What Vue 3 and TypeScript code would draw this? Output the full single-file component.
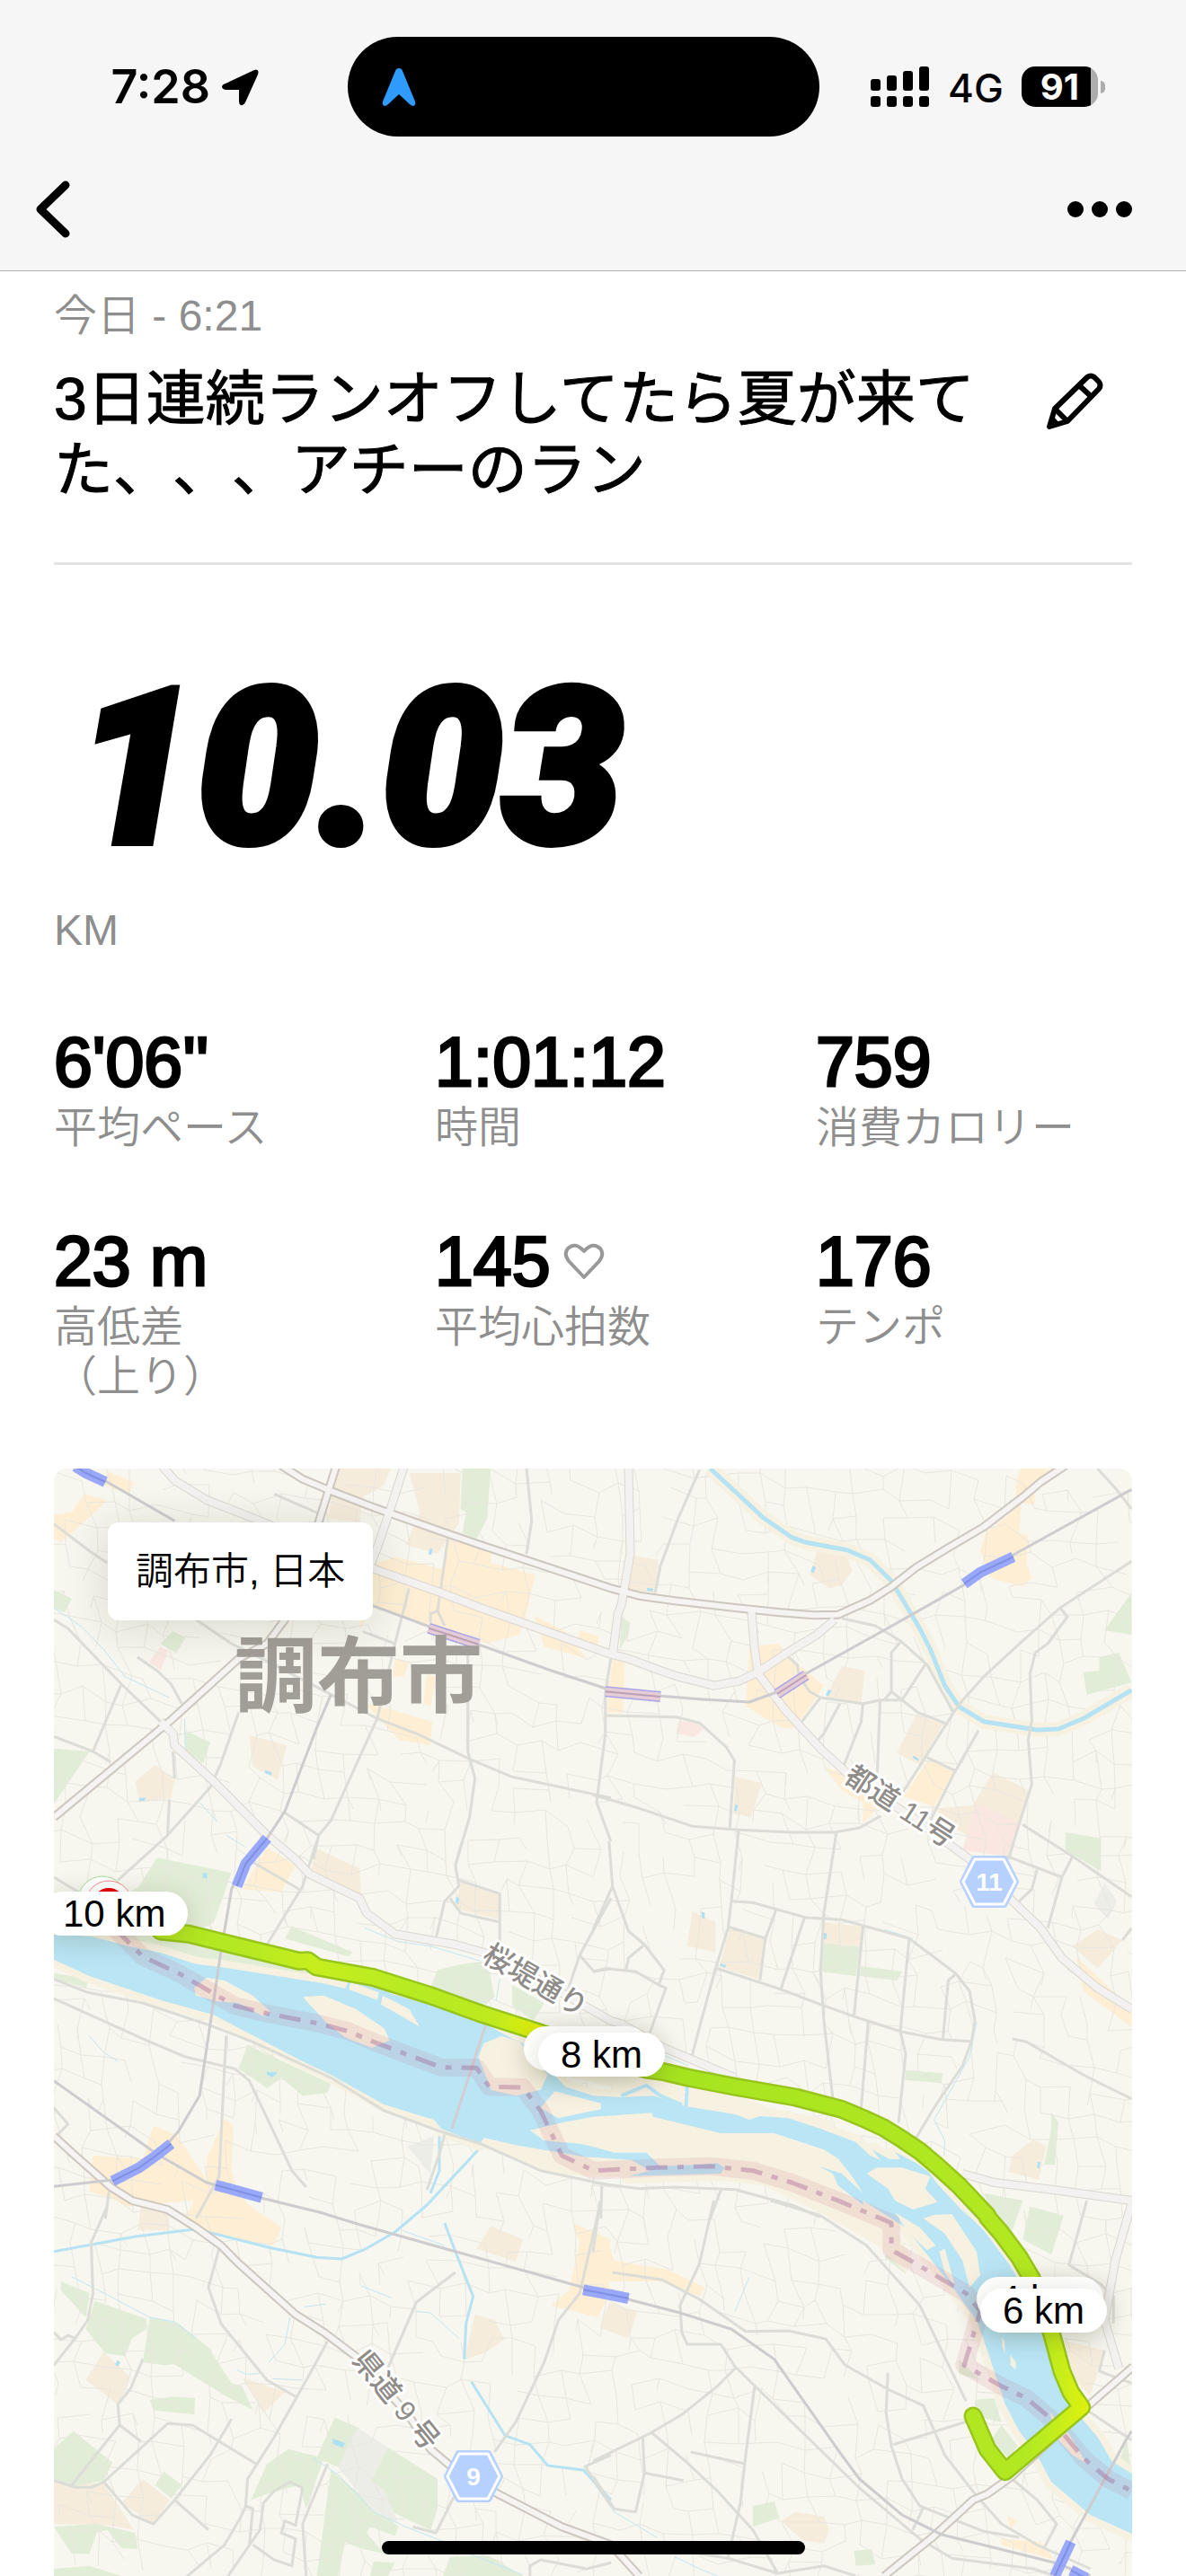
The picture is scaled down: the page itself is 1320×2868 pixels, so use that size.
<script setup lang="ts">
interface Stat {
  value: string
  label: string[]
  heart?: boolean
}

const stats: Stat[] = [
  { value: "6'06''", label: ['平均ペース'] },
  { value: '1:01:12', label: ['時間'] },
  { value: '759', label: ['消費カロリー'] },
  { value: '23 m', label: ['高低差', '（上り）'] },
  { value: '145', label: ['平均心拍数'], heart: true },
  { value: '176', label: ['テンポ'] },
]

// Map geometry is stored per tile; every tile has its own origin on the 1200 x 1233 map.
const tiles: Record<string, [number, number]> = {
  A: [0, -5],
  B: [600, -5],
  C: [0, 415],
  D: [600, 415],
  E: [0, 815],
  F: [600, 815],
}
const UNIT_X = 620 / 1568
const UNIT_Y = 1 / 3

function line(src: string): string {
  let tile = tiles.A
  const out: string[] = []
  for (const token of src.split(' ')) {
    if (tiles[token]) {
      tile = tiles[token]
      continue
    }
    const [x, y] = token.split(',').map(Number)
    out.push(`${(tile[0] + x * UNIT_X).toFixed(1)},${(tile[1] + y * UNIT_Y).toFixed(1)}`)
  }
  return out.join(' ')
}
const lines = (src: string): string[] =>
  src.trim().split('\n').map((row) => line(row.trim()))

const parks = lines(`
A 1150,10 1230,10 1225,80 1220,180 1190,250 1150,230 1160,160 1145,150
A 300,600 335,558 370,580 345,632
A 0,420 50,450 30,495 0,480
A 0,950 100,960 60,1030 0,1135
A 370,890 440,930 420,1000 372,960
B 80,510 105,530 100,570 75,620
B 1516,430 1516,570 1440,555
B 1380,695 1425,690 1425,645 1480,630 1516,730 1390,770
B 1330,1230 1430,1250 1430,1360 1330,1290
C 290,55 500,105 450,270 400,300 250,280 200,180 240,150
C 270,300 700,420 830,460 760,465 500,425 300,370 150,325
C 670,285 840,370 830,385 650,325
C 1150,410 1220,400 1240,520 1200,560 1060,490 1080,430
C 1290,480 1380,540 1350,600 1290,550
C 545,680 780,810 770,840 700,850 640,790 600,825 520,760
C 0,440 100,460 90,490 0,460
D 645,340 750,352 740,450 640,435
D 755,417 870,435 855,465 750,450
D 880,765 985,775 980,808 878,797
D 1290,905 1310,940 1300,1080 1270,1080 1290,960
D 1100,1175 1210,1200 1180,1300 1130,1260
D 120,770 180,800 130,820
F 1230,20 1325,50 1290,180 1210,130
F 850,150 885,210 880,245 820,190
F 1030,530 1090,600 1030,580
F 1075,665 1130,660 1150,740 1080,720
F 1150,750 1195,820 1170,860 1120,800
F 450,1020 510,1005 525,1060 450,1090
F 735,1170 785,1165 795,1215 740,1220
F 1500,800 1516,900 1480,880
E 20,270 100,310 90,390 20,300
E 115,335 260,395 260,430 220,460 200,520 145,510 90,430
E 270,390 350,410 445,500 400,540 310,550 250,540
E 340,490 440,500 500,610 530,620 560,700 480,650 330,540
E 270,665 340,655 397,660 395,715 280,700
E 0,830 55,770 165,875 140,935 50,955 0,930
E 310,905 360,950 330,995 285,950
E 660,830 760,860 710,1030 690,950 600,980 555,1000 600,880
E 790,725 860,760 800,890 740,860
E 940,825 1080,930 1080,1030 1060,1100 915,1020 890,940
E 780,900 850,970 970,1090 960,1120 890,1090 880,1110 930,1180 860,1160 820,1140 800,1254 740,1254
E 900,1205 960,1210 940,1254 890,1254
E 1115,1190 1220,1185 1320,1254 1095,1254
E 0,1090 120,1080 230,1110 235,1165 190,1160 150,1100 120,1110 100,1180 50,1180
E 0,1230 100,1220 190,1254 0,1254
`)

const shops = lines(`
A 150,25 225,60 210,100 140,70
A 85,100 150,120 130,145 60,220 20,260 0,250 0,170 50,160
A 1115,250 1230,280 1230,330 1355,370 1330,500 1310,570 1220,600 1100,560 900,480 860,550 890,340 960,310 1090,350
A 890,800 1065,860 1060,940 970,920 885,810
A 960,650 1000,660 985,710 955,710
A 1050,700 1075,710 1060,810 1040,800
A 1350,505 1440,560 1500,650 1380,610
A 1480,555 1535,575 1530,610 1475,585
B 1205,15 1320,15 1240,70 1245,135 1205,130 1200,230 1225,240 1220,330 1235,380 1210,410 1120,380 1090,290 1105,230 1190,150 1190,60
B 440,610 520,600 570,660 650,740 600,830 560,885 530,880 430,810
B 55,650 90,650 85,830 40,830 45,760
B 650,1010 720,1040 800,1150 760,1200 760,1130 700,1090
B 945,985 1015,1030 960,1145 875,1110
C 600,20 680,80 640,170 530,160
C 280,950 345,980 390,1060 430,1130 430,1060 480,925 505,950 500,1100 520,1180 580,1250 400,1260 390,1200 200,1220 160,1190 100,1170 110,1050 250,1060
E 400,0 530,0 640,90 620,150 440,110 370,50
E 1460,75 1568,130 1550,230 1568,300 1530,390 1400,350 1450,300 1480,140
F 0,120 40,130 60,200 210,230 315,290 300,320 190,270 0,270
D 1360,385 1516,560 1516,620 1380,500
F 1150,1130 1260,1140 1300,1200 1150,1150
F 1165,1050 1195,1070 1175,1095
`)

const schools = lines(`
A 800,10 950,10 930,70 870,110 860,195 770,180
A 1000,30 1145,30 1140,200 1080,300 990,270 1030,160
A 550,905 655,940 630,1055 560,1010
A 285,1005 340,1050 330,1115 240,1130 230,1060
B 110,305 185,320 175,430 100,420
B 630,290 710,295 730,355 700,405 665,415 610,370
B 700,675 765,690 755,795 655,780
B 910,835 985,870 920,1005 855,965
B 400,1045 475,1065 445,1180 395,1165
B 1125,1030 1225,1090 1200,1205 1170,1320 980,1190 970,1150 1070,1140
C 740,25 860,90 865,180 720,110
C 1145,135 1255,180 1250,260 1130,225
D 280,235 345,270 345,370 265,350
D 385,290 485,330 465,460 355,420
D 650,270 760,285 750,350 645,340
D 1420,295 1490,330 1420,425 1350,350
D 1240,995 1275,1020 1255,1130 1170,1105 1180,1050
E 245,20 325,40 325,100 235,100
E 140,505 215,590 180,680 90,600
E 530,590 650,640 590,710
E 250,930 325,1000 280,1080 190,1010
E 0,940 140,945 225,1100 160,1085 0,1080
E 1185,380 1240,400 1268,465 1210,510 1155,530
E 1230,85 1320,130 1300,205 1190,160
F 45,340 125,370 100,460 20,425
F 570,1040 650,1055 665,1100 650,1145 590,1135 530,1070
F 1260,450 1440,500 1400,650 1320,560
`)

const clinics = lines(`
A 300,610 322,625 300,690 268,660
B 240,858 290,860 310,885 285,912 235,900
B 1080,1130 1200,1200 1165,1310 1040,1290
`)

const depots = lines(`
E 855,760 940,825 890,935 930,965 970,1080 900,1040 800,890
C 995,1020 1070,985 1060,1110
D 1440,140 1475,200 1450,260 1410,210
`)

const pools = lines(`
B 618,340 628,345 620,365 613,360
B 152,413 170,416 168,425 152,424
B 663,752 672,758 662,776 655,770
B 902,974 918,985 914,992 900,982
B 400,1138 408,1140 404,1160 397,1158
A 1058,282 1067,284 1062,304 1054,300
A 595,1022 613,1030 612,1040 594,1032
A 240,1116 258,1114 256,1124 240,1126
D 305,236 315,238 314,258 306,256
D 358,408 374,413 372,422 358,416
D 650,306 658,308 656,328 648,326
D 1252,1070 1260,1072 1256,1094 1250,1090
E 178,533 188,540 180,554 172,548
E 785,795 820,810 812,826 785,812
C 420,104 432,108 430,126 418,120
C 598,770 630,772 615,788 600,780
C 1132,185 1141,190 1138,210 1131,205
`)

const river = line(
  'C 0,310 105,318 210,350 300,372 400,410 470,420 600,445 760,475 820,492 830,465 915,480 950,510 1100,560 1200,600 1290,660 1370,700 1400,770 1440,820 ' +
  'D 0,850 80,855 170,850 260,885 400,912 440,930 470,918 550,925 640,960 740,1005 780,1050 810,1065 785,1030 835,1062 865,1062 850,1038 910,1075 945,1105 970,1145 1060,1260 ' +
  'F 1040,30 1100,100 1170,210 1230,330 1270,460 1310,600 1370,720 1420,790 1460,870 1520,915 1530,1120 1400,1050 1290,940 1250,850 1200,770 1160,680 1110,500 1080,400 1000,270 940,180 880,90 840,60 760,0 ' +
  'D 760,1215 690,1150 675,1110 635,1085 700,1110 760,1175 730,1120 690,1060 650,1030 510,975 360,975 170,920 165,907 0,920 ' +
  'C 1430,940 1340,965 1380,1000 1480,1010 ' +
  'D 0,1020 60,1040 150,1040 190,1085 300,1080 350,1075 370,1090 360,1110 100,1118 160,1100 110,1065 0,1055 ' +
  'C 1500,1055 1400,1035 1300,1015 1210,990 1200,1010 1090,960 1070,930 930,880 780,780 700,735 570,655 450,580 300,530 100,450 0,395',
)
const floodplain = line(
  'C 1340,965 1568,920 D 170,905 360,975 510,975 650,1030 700,1100 780,1200 F 840,60 900,200 880,240 800,150 640,40 ' +
  'D 640,1240 480,1150 300,1125 0,1120 C 1400,1110 1200,1020 1340,1010',
)
const sandbanks = lines(`
C 395,490 430,455 480,465 560,515 610,570 590,585 520,540 460,535 400,515
C 700,520 760,515 850,560 930,625 945,665 895,690 820,655 770,610
C 925,515 1000,560 1030,620 980,585 920,545
C 835,470 915,505 910,530 830,495
C 1195,720 1210,675 1260,650 1310,670 1390,780 1370,830 1300,850 1230,830
C 1410,835 1540,875 1540,895 1420,925 1370,890
C 1400,770 1568,820 D 70,850 130,825 160,850 200,852 245,880 262,810 170,770 0,780
D 265,815 340,830 430,860 500,890 700,940 640,950 550,920 450,915 400,905 265,885
D 770,1110 800,1090 870,1090 950,1120 935,1160 970,1205 900,1230 850,1200 830,1160
F 930,60 960,48 1010,45 1080,170 1090,250 1060,290 1040,200 990,110
F 975,170 990,160 1020,290 990,240
F 850,40 920,90 965,150 940,165 890,110
F 1175,515 1190,540 1190,565 1175,550
F 1150,455 1158,470 1160,510 1153,490
F 1285,705 1340,780 1390,880 1350,850 1310,800
`)
const inlets = lines(`
C 1255,865 1320,868 1365,850 1400,800
D 80,850 130,825 150,815 190,850 250,880
D 265,815 262,885
`)

const prefecture = line(
  'C 170,290 250,385 350,440 430,495 510,550 600,575 750,610 830,635 900,670 1000,715 1090,755 1190,757 1225,820 1320,822 1370,900 1430,1050 1520,1100 ' +
  'D 180,1090 330,1085 450,1100 560,1140 700,1205 800,1255 F 840,75 840,165 900,205 1050,310 1090,370 1045,550 1150,620 1220,660 1290,730 1380,860 1450,930 1516,970',
)

const canal = line('B 330,15 480,180 560,245 600,262 715,287 780,320 840,390 920,550 950,620 990,740 1030,810 1100,860 1250,888 1310,885 1380,850 1516,755')
const creeks = lines(`
E 0,170 230,120 400,95 600,155 740,190 810,195 880,160 960,105 1050,15 C 1195,1030
E 1175,605 1220,690 1270,785 1340,815 1390,885 1490,900 1568,1000
E 1100,75 1130,170 1180,320 1160,410 1155,530
C 1085,985 1085,1100 1060,1175
`)
const brooks = lines(`
A 0,480 80,545 140,620 200,710 325,780
A 368,850 370,960
A 410,1130 460,1195
A 485,1240 540,1280
C 875,290 970,335 1060,350 1200,400
C 100,650 140,705 180,735
C 1255,460 1245,530
E 980,100 1100,150
E 865,80 940,105
E 50,255 150,315 270,390 340,405 400,460
E 865,285 950,325
E 1020,370 1060,375 1140,460
E 665,390 650,480 605,540
E 705,355 765,346
E 615,595 700,600
E 730,860 800,915 900,1040 990,1090 1100,1140
E 1170,1180 1320,1250
E 515,565 540,580 580,578
D 820,295 900,325
D 1080,605 1060,720 960,930 990,1000 988,1050
D 200,715 270,750
F 440,255 400,370
F 0,940 60,1040 180,1125
F 230,1190 300,1230 350,1254
`)

const streets = lines(`
A 0,200 100,290 150,330
A 400,520 500,600 570,640 780,770 910,850 1020,900 1170,985 1290,1045 1430,1080 1568,1115
A 620,100 745,165
A 0,520 40,550 190,735 300,860
A 190,735 110,960
A 0,910 110,960 160,995
A 235,645 290,690 330,735 360,800
A 520,830 470,1000 440,1080 320,1240 180,1390
A 320,1240 325,1120
A 335,960 340,1050
A 1110,240 1080,490 1060,500 1060,530
A 1080,490 1100,540
A 1000,415 960,600 910,850 860,980 780,1190 745,1240 730,1320
A 745,1240 650,1165
A 1165,600 1165,960 1185,1050 1170,1180 1130,1340
A 1330,10 1345,190 1330,300
A 870,560 960,600
B 300,20 240,180 190,340 175,430
B 50,650 35,760 35,900 10,1130 50,1260
B 35,840 235,845 300,865 375,945 398,990 385,1215
B 0,1105 130,1150 280,1210 410,1222 560,1230 680,1230 750,1215 810,1175
B 545,640 575,670 580,710 610,760 640,780 585,865
B 640,780 760,800 810,788 870,788 915,830 1000,870
B 695,800 650,900 635,920
B 760,800 755,860 705,1010
B 808,790 800,1040
B 840,760 820,788
B 840,760 870,788
B 840,760 840,630 865,595
B 935,670 870,788
B 700,515 795,540 865,590 940,670 1015,830
B 1516,325 1315,480 1210,590 1100,710 1040,790 1015,830 935,980 865,1110
B 1315,480 1335,510 1280,600 1245,630 1230,700 1235,860 1225,920 1235,1070 1200,1200 1170,1320
B 940,980 1020,1025 950,1190
B 1020,1025 1085,890
B 1210,1205 1350,1310 D 1516,185
B 1420,15 1470,80 1516,150
B 410,1222 D 390,195 380,290 345,425 300,620 278,720
B 685,1230 D 650,240 640,430 650,600 675,860
C 740,0 700,150 600,345
C 0,120 70,170
C 560,70 690,160
C 0,460 95,505 250,540 440,615 560,670 780,790 930,900 1090,970 1200,1010 1370,1100 1568,1150
C 0,525 270,670 370,720 510,760 550,800 610,950 670,1100 710,1155
C 485,650 480,760 465,1120 400,1260
C 1150,0 1130,80 1140,150 1100,200 1075,325
C 1140,130 1255,175 1255,350
C 1115,190 1145,240 1255,270
C 1568,190 1480,380 1440,520
C 1480,380 1520,435 1568,425
C 1100,980 1085,1045 1050,1165
C 0,890 40,945 10,980
C 155,1170 145,1260
D 45,0 55,150 0,295
D 55,150 100,300 145,345 200,430 185,480 205,490 160,640
D 145,345 100,390 92,435
D 0,435 35,425 120,435 185,480
D 390,200 450,205 600,255 700,262 890,325 1020,440 1060,500 1075,600 1065,670 1040,750 960,890 910,990
D 380,285 485,325 470,465
D 515,230 485,325
D 595,255 530,490
D 350,425 530,495 640,545 735,585 865,635 980,662 1065,668
D 760,285 735,580
D 890,325 865,635 880,710 860,940
D 775,600 755,890
D 1020,445 1000,465 985,660
D 1180,660 1220,670 1300,725 1380,780 1430,810 1516,860
D 1165,50 1320,120 1350,50
D 1250,95 1235,160 1200,200
D 1320,120 1280,290
D 0,1140 130,1160 230,1155 400,1163 560,1215 640,1255
D 25,1150 22,1260
D 360,1165 330,1260
D 1516,290 1490,330
E 150,20 105,140 110,310 95,400 60,460 0,550
E 0,440 20,465 40,450 60,460
E 465,160 435,290 470,410 600,600 680,655
E 770,470 720,580 620,790 545,930 540,1020 525,1060 480,1150 370,1260
E 540,1020 560,1030 550,1150
E 0,935 60,958 105,958 140,940 320,745 390,750 570,880
E 250,530 215,630 180,680 185,750 245,805
E 185,750 50,950
E 500,730 440,850 340,1000 280,1080 220,1050 140,940
E 340,1000 435,1100
E 1130,240 1020,340 940,560
E 1540,0 1480,310 1420,400 1380,540 1300,740 1240,840
E 1130,980 1075,1110 1010,1090
E 770,880 700,1080 710,1254
E 560,1150 620,1200 670,1220 680,1130 640,1110 650,1070 680,1085 700,960 665,940 620,970 590,1010 580,1100 490,1254
E 1568,850 1495,888 1568,1020
E 1340,1254 1340,1220 1370,1200 1500,1230 1568,1210
F 340,0 300,210 245,350 250,440 265,480 360,480 400,555 560,740 750,960 920,1130 1010,1195 1240,1230 1300,1254
F 20,0 0,170
F 55,240 195,265 300,330 430,437 550,435 655,462 710,550 830,630 930,685 990,850 1075,980 1150,1080 1250,1150 1400,1230
F 500,0 640,50 770,150 920,350 1050,670
F 400,560 350,620 250,715 165,775 0,870
F 140,790 145,910 120,1040 60,1030 0,920
F 145,910 255,935
F 165,775 260,870 350,970 450,1100 520,1245
F 455,620 430,850 415,1010 380,1190
F 275,840 430,880
F 830,575 825,710 840,820 870,930 920,1020 1100,1105 1200,1125
F 845,815 1060,735
F 930,1025 900,1100
F 1180,930 1250,1000 1305,1080 1270,1160
F 1390,0 1340,215 1430,280 1465,320 1465,410
F 1440,500 1425,570 1516,610
F 1390,700 1516,800
F 300,1180 380,1195 520,1245 650,1220 740,1254
`)

const avenues = lines(`
A 300,0 340,55 430,120 560,180 600,200 900,350 1090,430 1200,480 1320,530 1568,635 B 100,650 190,690 240,710 340,740 410,725 465,695 560,620 630,570 680,520
A 985,10 950,140 910,280 890,340
A 300,860 335,900 340,940 450,1060 600,1240 680,1320 C 720,110 860,190 880,240 960,310 1130,345 1250,385 1568,600 D 80,610 200,690 400,790
B 100,10 105,300 80,470 70,500 55,640
B 445,480 455,620 465,700 540,820 640,950 740,1060 900,1180 1060,1320 D 1060,60 1190,210 1260,290 1320,390 1420,490 1516,560
D 1040,1110 1130,1140 1300,1165 1516,1200
F 1516,10 1470,200 1440,400 1480,560
`)
const highways = lines(`
A 640,5 700,50 780,90 900,145 1090,225 1200,270 1340,325 1568,415 B 130,440 230,457 400,480 520,495 620,505 690,503 780,455 840,410 910,345 1000,280 1100,210 1210,110 1260,60 1330,5
A 795,5 770,100 745,195 650,520 600,600 520,650 330,855 0,1180
C 0,985 60,1050 160,1155 220,1200 320,1230 E 400,90 470,150 520,210 680,380 760,440 860,530 1000,720 1060,830 1120,890 1250,980 1430,1090 1568,1150 F 130,1254
F 820,1254 960,1120 1070,1000 1110,980 1180,920 1380,700 1520,555
`)

const rails = lines(`
A 100,20 150,60 340,190
A 890,470 1050,540 1200,605 1400,690 1568,755 B 190,775 300,785 440,795 510,765 600,700 850,535 1050,400 1180,305 1516,85
A 780,770 740,880 650,1160 600,1250 C 540,70 500,160 470,370 440,610 410,850 350,970 320,1010 170,1130 0,1153
C 0,800 290,1045 430,1140 580,1190 750,1240 E 860,80 1130,170 1490,290 1568,315 F 245,375 390,430 510,530 700,850 750,930 870,1050 980,1115 1300,1210 1400,1254
F 1516,770 1500,800 1340,1150 1290,1254
`)
const stations = lines(`
A 60,8 90,30 145,60
B 1045,400 1090,362 1183,310
A 600,1250 C 540,75 515,150
C 165,1135 240,1090 290,1048 330,1010
C 455,1148 585,1190
E 1490,298 1568,315 F 100,327
F 1345,1140 1300,1254
F 1345,1235 1390,1262
`)
const underground = lines(`
B 518,768 600,705
A 1055,548 1195,602
B 35,760 190,777
`)

const footbridge = line('C 1215,615 1120,960')

const route = line(
  'C 300,300 380,310 500,345 690,400 715,398 740,420 900,455 1060,515 1200,575 1370,640 D 150,762 200,770 270,790 400,820 570,855 700,895 760,925 820,958 870,995 920,1035 970,1085 1030,1150 1110,1250 ' +
  'F 1110,55 1150,110 1200,190 1235,260 1290,440 1320,570 1345,640 1375,690 1160,905 1110,830 1070,720',
)

// Side streets: a jittered lattice with some edges left out.
function sideStreets(): string {
  let seed = 20240621
  const rnd = () => {
    seed = (seed * 1664525 + 1013904223) % 4294967296
    return seed / 4294967296
  }
  const step = 27
  const cols = 49
  const rows = 50
  const node: [number, number][][] = []
  for (let r = 0; r < rows; r++) {
    node.push([])
    for (let c = 0; c < cols; c++) {
      const x = -40 + c * step + (rnd() - 0.5) * 17 + r * 2
      const y = -50 + r * step + (rnd() - 0.5) * 17 + c * 3 - 60
      node[r].push([Math.round(x - 40), Math.round(y)])
    }
  }
  let d = ''
  for (let r = 0; r < rows - 1; r++) {
    for (let c = 0; c < cols - 1; c++) {
      const [x, y] = node[r][c]
      if (rnd() < 0.66) d += `M${x} ${y}L${node[r][c + 1].join(' ')}`
      if (rnd() < 0.66) d += `M${x} ${y}L${node[r + 1][c].join(' ')}`
      if (rnd() < 0.12) d += `M${x} ${y}l${Math.round(rnd() * 16 - 8)} 13`
    }
  }
  return d
}
const lanes = sideStreets()

interface Pin {
  text: string
  x: number
  y: number
}
const pins: Pin[] = [
  { text: '10 km', x: -15, y: 471 },
  { text: '', x: 523, y: 621 },
  { text: '8 km', x: 539, y: 628 },
  { text: '4 km', x: 1027, y: 900 },
  { text: '6 km', x: 1031, y: 913 },
]
const pinStyle = (p: Pin) => ({ left: `${(p.x / 1200) * 100}%`, top: `${(p.y / 1233) * 100}%` })

const shields = [
  { no: '11', x: 1041, y: 460 },
  { no: '9', x: 467, y: 1122 },
]
const roadNames = [
  { name: '都道 11号', x: 942, y: 376, turn: 33 },
  { name: '桜堤通り', x: 536, y: 570, turn: 30 },
  { name: '県道 9 号', x: 381, y: 1037, turn: 51 },
]
</script>

<template>
  <div class="screen">
    <header class="top">
      <div class="status">
        <div class="clock">
          <span>7:28</span>
          <svg width="44" height="42" viewBox="0 0 44 42" aria-hidden="true">
            <path d="M5 17 37 2q6-2 4 5L27 38q-2 4-5 3-2-1-2-4V24H6q-4 0-5-3 0-3 4-4z" fill="#000" />
          </svg>
        </div>
        <div class="island">
          <svg width="38" height="42" viewBox="0 0 38 42" aria-hidden="true">
            <path d="M19 0q3 0 4 3l14 34q1 4-2 5-2 0-4-2L19 29 7 40q-2 2-4 2-3-1-2-5L15 3q1-3 4-3z" fill="#2f9bff" />
          </svg>
        </div>
        <div class="system">
          <svg width="66" height="46" viewBox="0 0 66 46" aria-hidden="true">
            <g fill="#000">
              <rect x="0" y="14" width="11" height="13" rx="3" />
              <rect x="18" y="10" width="11" height="17" rx="3" />
              <rect x="36" y="5" width="11" height="22" rx="3" />
              <rect x="54" y="0" width="11" height="27" rx="3" />
              <rect x="0" y="33" width="11" height="12" rx="3" />
              <rect x="18" y="33" width="11" height="12" rx="3" />
              <rect x="36" y="33" width="11" height="12" rx="3" />
              <rect x="54" y="33" width="11" height="12" rx="3" />
            </g>
          </svg>
          <span class="network">4G</span>
          <span class="battery">91</span>
          <span class="nub"></span>
        </div>
      </div>
      <nav class="nav">
        <button type="button" class="icon" aria-label="戻る">
          <svg width="38" height="64" viewBox="0 0 38 64" aria-hidden="true">
            <path d="M33 5 5 32l28 27" fill="none" stroke="#000" stroke-width="9" stroke-linecap="round" stroke-linejoin="round" />
          </svg>
        </button>
        <button type="button" class="icon" aria-label="その他">
          <svg width="74" height="20" viewBox="0 0 74 20" aria-hidden="true">
            <circle cx="10" cy="10" r="9" /><circle cx="37" cy="10" r="9" /><circle cx="64" cy="10" r="9" />
          </svg>
        </button>
      </nav>
    </header>

    <main class="run">
      <section class="heading">
        <p class="date">今日 - 6:21</p>
        <div class="title-row">
          <h1>3日連続ランオフしてたら夏が来てた、、、アチーのラン</h1>
          <button type="button" class="icon edit" aria-label="編集">
            <svg width="64" height="64" viewBox="0 0 64 64" aria-hidden="true">
              <g fill="none" stroke="#000" stroke-width="6" stroke-linejoin="round">
                <path d="M4 60 10 40 46 5q4-3 8 0l5 5q3 4 0 8L24 54z" />
                <path d="m37 14 14 13M10 40l14 14" />
              </g>
              <path d="M3 61 7 47l10 11z" />
            </svg>
          </button>
        </div>
      </section>

      <section class="distance">
        <p class="figure">10.03</p>
        <p class="unit">KM</p>
      </section>

      <dl class="stats">
        <div v-for="s in stats" :key="s.label[0]" class="stat">
          <dd>
            <span>{{ s.value }}</span>
            <svg v-if="s.heart" width="46" height="42" viewBox="0 0 46 42" aria-hidden="true">
              <path d="M23 39 6 21q-6-8-1-14 8-8 18 3 10-11 18-3 5 6-1 14z" fill="none" stroke="#999" stroke-width="4" stroke-linejoin="round" />
            </svg>
          </dd>
          <dt><span v-for="l in s.label" :key="l">{{ l }}</span></dt>
        </div>
      </dl>

      <section class="map" aria-label="ルート">
        <svg class="ground" viewBox="0 0 1200 1233" aria-hidden="true">
          <defs>
            <linearGradient id="pace" gradientUnits="userSpaceOnUse" x1="0" y1="0" x2="1200" y2="0">
              <stop offset="0" stop-color="#b0e620" />
              <stop offset=".17" stop-color="#b4e822" />
              <stop offset=".24" stop-color="#c6ee1e" />
              <stop offset=".34" stop-color="#b6ea22" />
              <stop offset=".41" stop-color="#bfea1e" />
              <stop offset=".45" stop-color="#e4ee0a" />
              <stop offset=".5" stop-color="#c4ec18" />
              <stop offset=".56" stop-color="#a6e420" />
              <stop offset=".9" stop-color="#b2e822" />
              <stop offset=".92" stop-color="#bcec20" />
              <stop offset=".955" stop-color="#daf010" />
            </linearGradient>
          </defs>
          <rect width="1200" height="1233" fill="#f7f6ef" />
          <polygon v-for="(p, i) in schools" :key="'s' + i" :points="p" fill="#f6ecdc" />
          <polygon v-for="(p, i) in shops" :key="'c' + i" :points="p" fill="#feefd4" />
          <polygon v-for="(p, i) in clinics" :key="'h' + i" :points="p" fill="#fbe7e1" />
          <polygon v-for="(p, i) in parks" :key="'p' + i" :points="p" fill="#e1edd6" />
          <polygon v-for="(p, i) in depots" :key="'d' + i" :points="p" fill="#ededE8" />
          <path :d="lanes" fill="none" stroke="#e8e7df" stroke-width="1" />
          <g fill="none" stroke-linejoin="round">
            <polyline :points="canal" stroke="#f6f1e1" stroke-width="16" />
            <polyline :points="canal" stroke="#b6e3f3" stroke-width="5" />
            <polyline v-for="(p, i) in creeks" :key="'k' + i" :points="p" stroke="#b6e3f3" stroke-width="3" />
            <polyline v-for="(p, i) in brooks" :key="'b' + i" :points="p" stroke="#c2e7f4" stroke-width="1" />
          </g>
          <polygon :points="river" fill="#f6f1e1" stroke="#f6f1e1" stroke-width="16" stroke-linejoin="round" />
          <polygon :points="floodplain" fill="#f6f1e1" />
          <polygon :points="river" fill="#b9e5f5" />
          <polygon v-for="(p, i) in sandbanks" :key="'i' + i" :points="p" fill="#f6f1e1" />
          <g fill="none" stroke="#b9e5f5" stroke-width="4">
            <polyline v-for="(p, i) in inlets" :key="'n' + i" :points="p" />
          </g>
          <polygon v-for="(p, i) in pools" :key="'w' + i" :points="p" fill="#aee1f4" />

          <g fill="none" stroke-linejoin="round">
            <polyline v-for="(p, i) in streets" :key="'t' + i" :points="p" stroke="#dcddd7" stroke-width="3" />
            <polyline v-for="(p, i) in avenues" :key="'ac' + i" :points="p" stroke="#dbd6cf" stroke-width="10" />
            <polyline v-for="(p, i) in highways" :key="'hc' + i" :points="p" stroke="#cdc7bf" stroke-width="10" />
            <polyline v-for="(p, i) in avenues" :key="'a' + i" :points="p" stroke="#f3f2f1" stroke-width="8" />
            <polyline v-for="(p, i) in highways" :key="'hw' + i" :points="p" stroke="#f5f4f2" stroke-width="6" />
            <polyline :points="footbridge" stroke="#d3cdd0" stroke-width="3" />
            <polyline v-for="(p, i) in rails" :key="'r' + i" :points="p" stroke="#cdccce" stroke-width="3" />
            <polyline v-for="(p, i) in stations" :key="'st' + i" :points="p" stroke="#99a8f8" stroke-width="12" stroke-linejoin="miter" />
            <polyline v-for="(p, i) in stations" :key="'sr' + i" :points="p" stroke="#7f8fe2" stroke-width="2" />
            <polyline v-for="(p, i) in underground" :key="'u' + i" :points="p" stroke="#a9a4ea" stroke-width="12" />
            <polyline v-for="(p, i) in underground" :key="'ui' + i" :points="p" stroke="#e5ccd6" stroke-width="9" />
            <polyline v-for="(p, i) in underground" :key="'ur' + i" :points="p" stroke="#b9a0b4" stroke-width="2" />
            <polyline :points="prefecture" stroke="#c8647d" stroke-opacity=".13" stroke-width="20" />
            <polyline :points="prefecture" stroke="#9c5a8c" stroke-opacity=".36" stroke-width="5" stroke-dasharray="24 11 7 11" />
          </g>

          <text x="339" y="264" class="city">調布市</text>
          <text
            v-for="r in roadNames"
            :key="r.name"
            class="road-name"
            :transform="`translate(${r.x} ${r.y}) rotate(${r.turn})`"
            y="11"
          >{{ r.name }}</text>
          <g v-for="s in shields" :key="s.no" :transform="`translate(${s.x} ${s.y})`">
            <path d="M-17-26h34L30 0 17 26h-34L-30 0z" fill="#b6d1ff" stroke="#b6d1ff" stroke-width="6" stroke-linejoin="round" />
            <path d="M-16-25h32L29 0 16 25h-32L-29 0z" fill="#b6d1ff" stroke="#fff" stroke-width="3" stroke-linejoin="round" />
            <text class="shield-no" y="10">{{ s.no }}</text>
          </g>

          <g fill="none" stroke-linejoin="round" stroke-linecap="round">
            <polyline :points="route" stroke="#98c51c" stroke-width="21" />
            <polyline :points="route" stroke="url(#pace)" stroke-width="16" />
          </g>
          <circle cx="54" cy="481" r="27" fill="#fff" stroke="#a6dc9c" stroke-width="1" />
          <circle cx="61" cy="485" r="26" fill="#fff" stroke="#f08a8a" stroke-width="1" />
          <circle cx="61" cy="485" r="18" fill="#e60000" />
        </svg>
        <div class="place">調布市, 日本</div>
        <span v-for="p in pins" :key="p.x" class="pin" :style="pinStyle(p)">{{ p.text }}</span>
      </section>
    </main>

    <div class="home-bar"></div>
  </div>
</template>

<style>
body {
  margin: 0;
  background: #fff;
}
</style>

<style scoped>
.screen {
  font-family: "Liberation Sans", "Noto Sans CJK JP", sans-serif;
  color: #000;
  overflow: hidden;
}

p,
h1,
dl,
dd {
  margin: 0;
}

.icon {
  display: flex;
  align-items: center;
  justify-content: center;
  padding: 0;
  border: 0;
  background: none;
}

.top {
  background: #f6f6f6;
  border-bottom: 1px solid #b0b0b0;
}

.status {
  display: grid;
  grid-template-columns: 387fr 525fr 408fr;
  align-items: center;
  padding-top: 41px;
  font-family: Inter, "Liberation Sans", sans-serif;
}

.clock {
  display: flex;
  align-items: center;
  justify-content: flex-end;
  gap: 12px;
  padding-right: 97px;
  font-size: 52px;
  line-height: 64px;
  font-weight: 600;
}

.island {
  display: flex;
  align-items: center;
  height: 111px;
  padding-left: 38px;
  border-radius: 56px;
  background: #000;
}

.system {
  display: flex;
  align-items: center;
  padding-left: 57px;
}

.network {
  margin: 2px 20px 0;
  font-size: 44px;
  line-height: 46px;
  font-weight: 500;
}

.battery {
  width: 85px;
  border-radius: 15px;
  background: linear-gradient(90deg, #000 77px, #adadad 77px);
  color: #fff;
  font-size: 40px;
  line-height: 45px;
  font-weight: 700;
  text-align: center;
}

.nub {
  width: 5px;
  height: 14px;
  margin-left: 3px;
  border-radius: 0 5px 5px 0;
  background: #adadad;
}

.nav {
  display: flex;
  align-items: center;
  justify-content: space-between;
  padding: 49px 59px 36px 40px;
}

.run {
  padding: 22px 60px 0;
}

.heading {
  padding-bottom: 63px;
  border-bottom: 3px solid #e3e3e3;
}

.date,
.unit,
dt {
  color: #8e8e8e;
  font-size: 48px;
  line-height: 55px;
  font-weight: 350;
}

.title-row {
  display: flex;
  align-items: flex-start;
  gap: 30px;
  margin-top: 26px;
}

h1 {
  flex: 1;
  font-size: 66px;
  line-height: 79px;
  font-weight: 400;
  text-spacing-trim: space-all;
  -webkit-text-stroke: 1px #000;
}

.edit {
  width: 64px;
  height: 84px;
  margin-right: 32px;
}

.distance {
  padding-top: 107px;
}

.figure {
  padding-left: 24px;
  font-family: Roboto, "Liberation Sans", sans-serif;
  font-size: 240px;
  line-height: 240px;
  font-weight: 900;
  font-style: italic;
  -webkit-text-stroke: 8px #000;
}

.unit {
  margin-top: 32px;
}

.stats {
  display: grid;
  grid-template-columns: repeat(3, 1fr);
  gap: 75px 72px;
  padding: 73px 0 75px;
}

.stat {
  display: flex;
  flex-direction: column;
}

dd {
  display: flex;
  align-items: center;
  gap: 15px;
  font-size: 77px;
  line-height: 92px;
  -webkit-text-stroke: 3px #000;
}

dt span {
  display: block;
  white-space: nowrap;
}

.map {
  position: relative;
  overflow: hidden;
  border-radius: 14px 14px 0 0;
}

.ground {
  display: block;
  width: 100%;
}

.city {
  fill: #a19d97;
  font-size: 92px;
  font-weight: 700;
  text-anchor: middle;
}

.road-name {
  fill: #8f8c89;
  stroke: #fff;
  stroke-width: 6px;
  stroke-linejoin: round;
  paint-order: stroke;
  font-size: 32px;
  font-weight: 500;
  text-anchor: middle;
}

.shield-no {
  fill: #fff;
  font-size: 28px;
  font-weight: 700;
  text-anchor: middle;
}

.place {
  position: absolute;
  left: 60px;
  top: 60px;
  padding: 0 31px;
  border-radius: 12px;
  background: #fff;
  box-shadow: 0 6px 50px rgba(60, 60, 20, 0.16);
  font-size: 42px;
  line-height: 109px;
  font-weight: 350;
}

.pin {
  position: absolute;
  min-width: 90px;
  min-height: 49px;
  padding: 0 25px;
  border-radius: 25px;
  background: #fff;
  box-shadow: 0 6px 30px rgba(60, 60, 20, 0.2);
  font-size: 42px;
  line-height: 49px;
  white-space: nowrap;
}

.home-bar {
  position: fixed;
  left: 50%;
  bottom: 24px;
  width: 471px;
  height: 15px;
  margin-left: -235px;
  border-radius: 8px;
  background: #000;
}
</style>
